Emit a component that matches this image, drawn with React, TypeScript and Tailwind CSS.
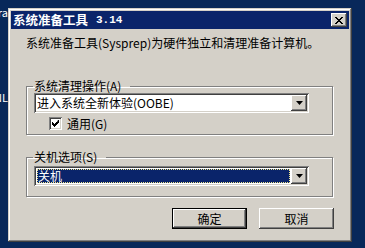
import React from "react";

const face = "bg-[#d4d0c8]";
const raised =
  "shadow-[inset_-1px_-1px_#404040,inset_1px_1px_#ffffff,inset_-2px_-2px_#808080,inset_2px_2px_#d4d0c8]";
const sunken =
  "shadow-[inset_1px_1px_#808080,inset_-1px_-1px_#ffffff,inset_2px_2px_#404040,inset_-2px_-2px_#d4d0c8]";

const DropArrow: React.FC = () => (
  <div className={`w-[16px] h-[16px] ${face} ${raised} flex items-center justify-center`}>
    <svg width="7" height="4" viewBox="0 0 7 4">
      <polygon points="0,0 7,0 3.5,4" fill="#000" />
    </svg>
  </div>
);

const Combo: React.FC<{ text: string; selected?: boolean }> = ({ text, selected }) => (
  <div className={`w-[275px] h-[20px] bg-white ${sunken} flex items-center p-[2px]`}>
    <div className="flex-1 h-full p-[1px]">
      {selected ? (
        <div className="h-full bg-[#0a246a] outline outline-1 outline-dotted outline-[#f0e68c] -outline-offset-1 text-white leading-[14px] pl-[1px]">
          {text}
        </div>
      ) : (
        <div className="h-full text-black leading-[14px] pl-0">{text}</div>
      )}
    </div>
    <DropArrow />
  </div>
);

export default function App() {
  return (
    <div className="w-[365px] h-[248px] bg-[#08285a] flex overflow-hidden font-['Noto_Sans_CJK_SC',sans-serif] text-[12px]">
      <div className="w-[8px] overflow-hidden text-white text-[11px] leading-[8px] flex flex-col items-end">
        <div className="mt-[8px] whitespace-nowrap">ra</div>
        <div className="mt-[77px] whitespace-nowrap">NL</div>
      </div>

      <div className={`mt-[8px] w-[344px] h-[234px] p-[3px] ${face} shadow-[inset_-1px_-1px_#404040,inset_1px_1px_#d4d0c8,inset_-2px_-2px_#808080,inset_2px_2px_#ffffff]`}>
        <div className="h-[18px] bg-[#0a246a] flex items-center justify-between pl-[2px] pr-[2px]">
          <span className="text-white font-bold text-[12.5px] leading-[14px] flex items-center">
            系统准备工具
            <span className="ml-[8px] font-['Liberation_Mono',monospace] text-[11px]">3.14</span>
          </span>
          <div className={`w-[16px] h-[14px] ${face} ${raised} flex items-center justify-center`}>
            <svg width="8" height="7" viewBox="0 0 8 7">
              <path d="M0 0h2v1h-2zM6 0h2v1h-2zM1 1h2v1h-2zM5 1h2v1h-2zM2 2h4v1h-4zM3 3h2v1h-2zM2 4h4v1h-4zM1 5h2v1h-2zM5 5h2v1h-2zM0 6h2v1h-2zM6 6h2v1h-2z" fill="#000" />
            </svg>
          </div>
        </div>

        <div className="pl-[15px]">
          <div className="mt-[7px] leading-[14px] text-black">
            系统准备工具(Sysprep)为硬件独立和清理准备计算机。
          </div>

          <fieldset className="mt-[29px] w-[307px] border border-[#808080] shadow-[inset_1px_1px_#ffffff,1px_1px_#ffffff] pl-[7px] pb-[4px]">
            <legend className="-ml-[1px] pl-[1px] pr-[9px] leading-[14px] text-black">系统清理操作(A)</legend>
            <Combo text="进入系统全新体验(OOBE)" />
            <div className="mt-[4px] ml-[15px] h-[13px] flex items-center gap-[5px]">
              <div className={`w-[13px] h-[13px] bg-white ${sunken} flex items-center justify-center`}>
                <svg width="7" height="7" viewBox="0 0 7 7">
                  <path d="M6 0h1v3h-1v1h-1v1h-1v1h-1v1h-1v-1h-1v-1h-1v-3h1v1h1v1h1v-1h1v-1h1z" fill="#000" />
                </svg>
              </div>
              <span className="leading-[14px] text-black">通用(G)</span>
            </div>
          </fieldset>

          <fieldset className="mt-[15px] w-[307px] border border-[#808080] shadow-[inset_1px_1px_#ffffff,1px_1px_#ffffff] pl-[7px] pb-[10px]">
            <legend className="-ml-[1px] pl-[1px] pr-[9px] leading-[14px] text-black">关机选项(S)</legend>
            <div className="mt-[2px]">
              <Combo text="关机" selected />
            </div>
          </fieldset>

          <div className="mt-[11px] flex pl-[146px] gap-[12px]">
            <button className="w-[75px] h-[21px] border border-black bg-[#d4d0c8] p-0">
              <div className={`w-full h-full ${raised} flex items-center justify-center leading-[14px] text-black`}>确定</div>
            </button>
            <button className={`w-[75px] h-[21px] ${face} ${raised} flex items-center justify-center leading-[14px] text-black`}>
              取消
            </button>
          </div>
        </div>
      </div>
    </div>
  );
}
